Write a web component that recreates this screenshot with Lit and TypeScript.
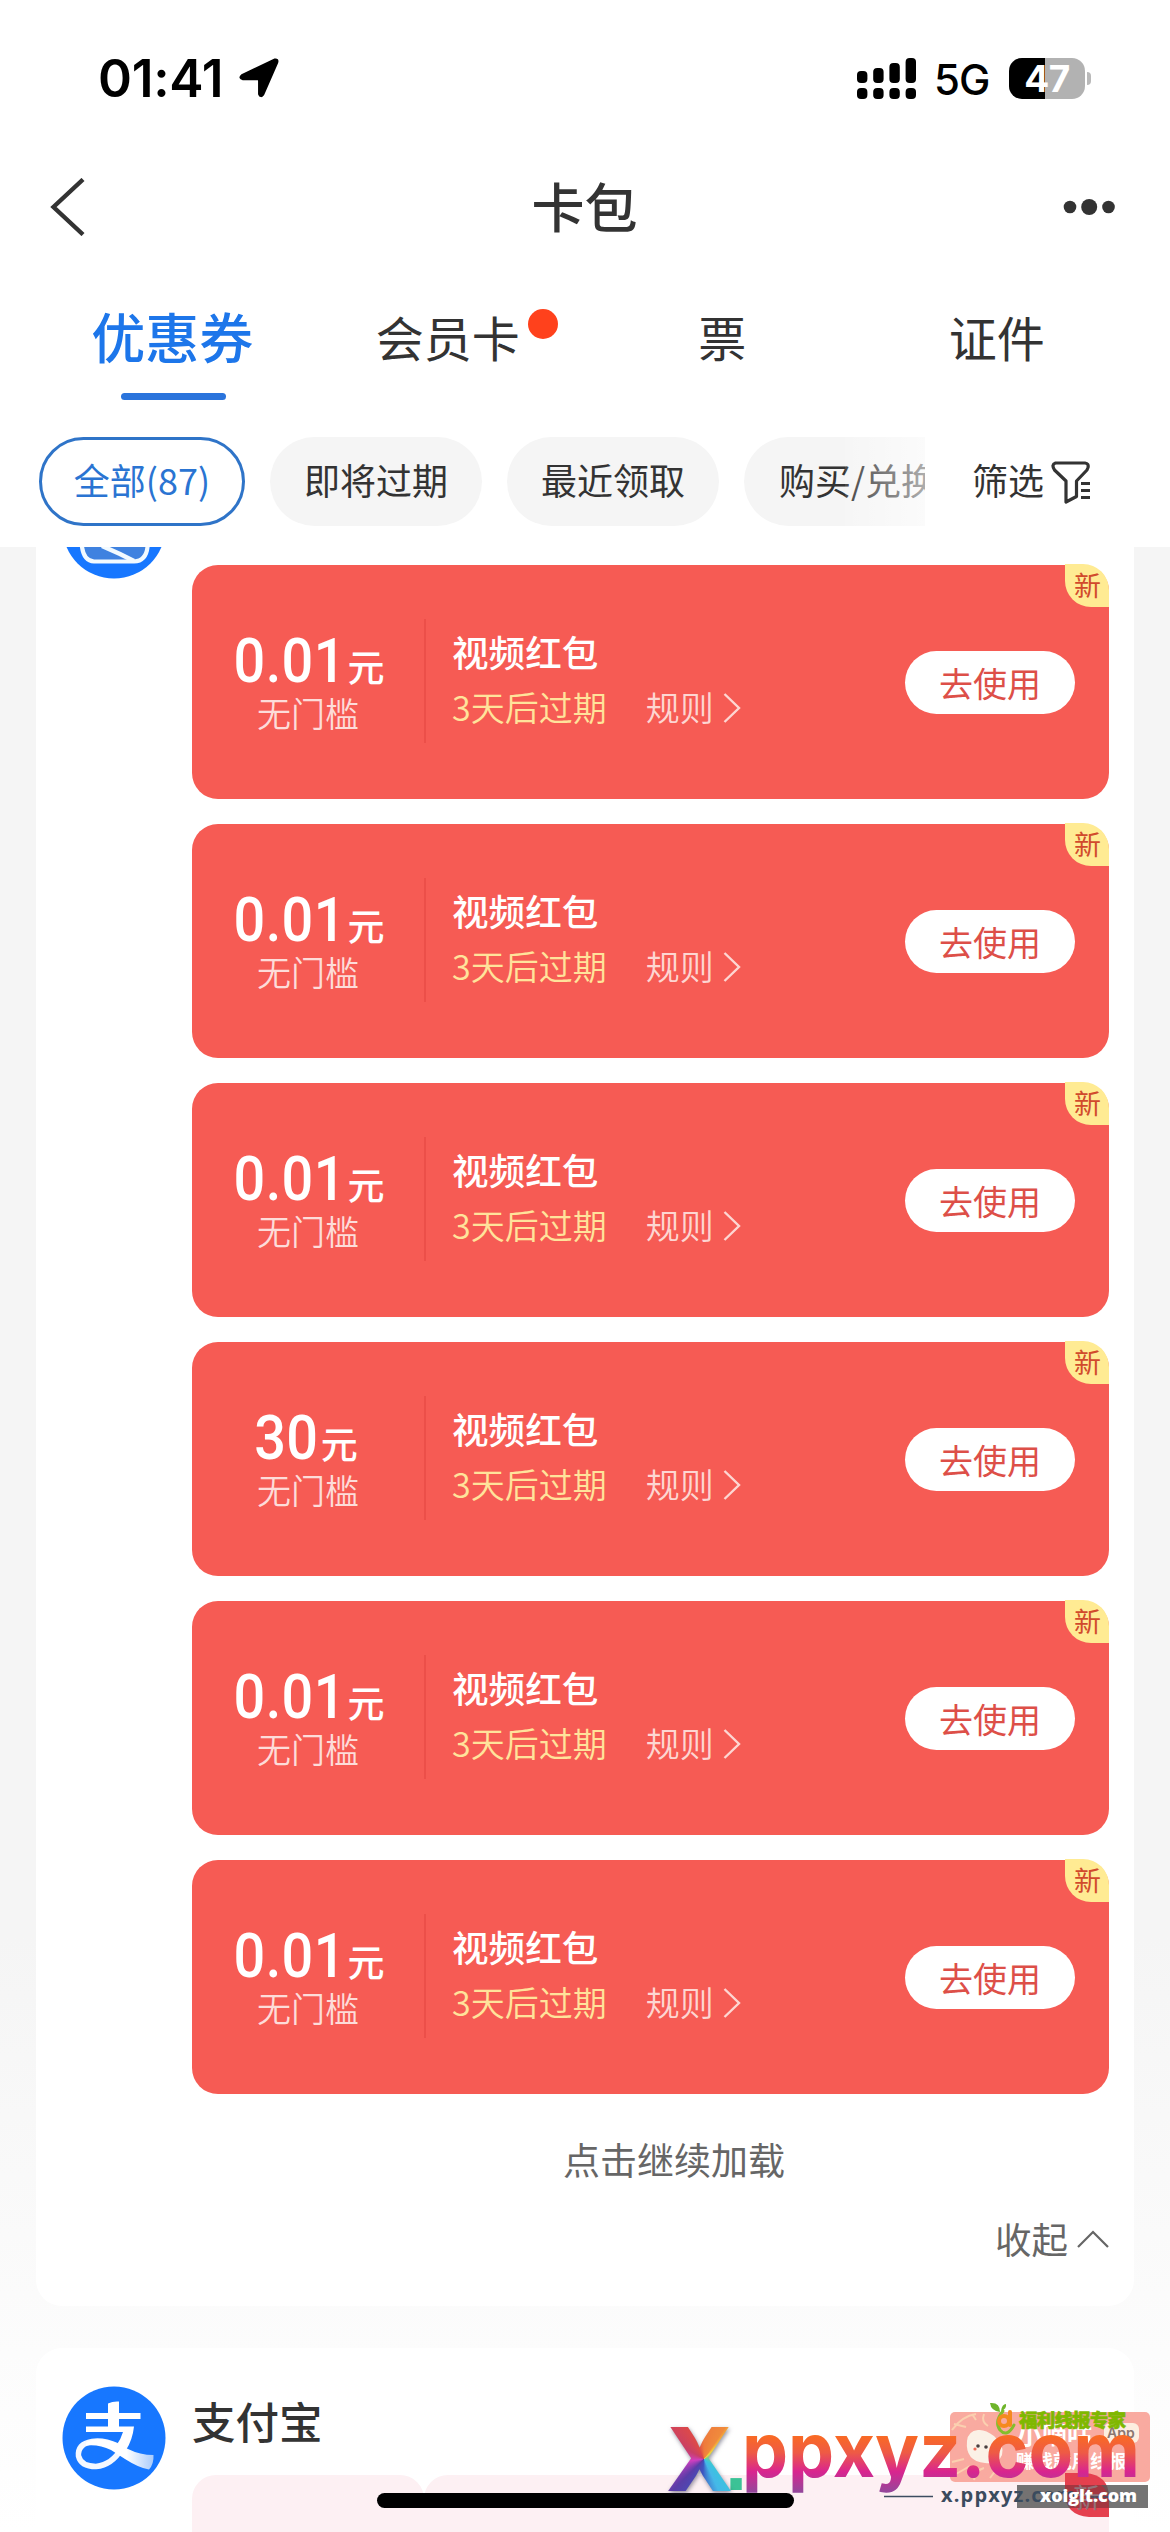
import { LitElement, html, css, svg } from "lit";
import { customElement, property } from "lit/decorators.js";

const sans = css`"Noto Sans CJK SC", "Noto Sans", sans-serif`;

@customElement("status-bar")
class StatusBar extends LitElement {
  static styles = css`
    :host {
      display: flex;
      align-items: center;
      height: 156px;
      padding: 0 79px 0 98px;
      box-sizing: border-box;
      font-family: Inter, sans-serif;
      color: #000;
    }
    .time {
      font-size: 51.5px;
      font-weight: 600;
      line-height: 60px;
      width: 129px;
      letter-spacing: -0.3px;
      white-space: nowrap;
    }
    .arrow { margin-left: 12px; }
    .signal { margin-left: auto; }
    .net {
      font-size: 42px;
      font-weight: 500;
      line-height: 60px;
      width: 55px;
      margin: 3px 0 0 18px;
      letter-spacing: -1px;
    }
    .battery {
      display: flex;
      align-items: center;
      margin-left: 20px;
    }
    .cell {
      width: 76px;
      height: 41px;
      border-radius: 13px;
      background: linear-gradient(90deg, #000 47%, #b2b2b2 47%);
      color: #fff;
      font-size: 37px;
      font-weight: 700;
      line-height: 41px;
      text-align: center;
      letter-spacing: -0.5px;
    }
    .nub {
      width: 4px;
      height: 13px;
      margin-left: 2px;
      border-radius: 0 4px 4px 0;
      background: #b9b9b9;
    }
  `;
  render() {
    const tops = [13, 10, 5, 0];
    return html`
      <span class="time">01:41</span>
      <svg class="arrow" width="40" height="40" viewBox="0 0 40 40">
        <path d="M3 17.500 35.500 1.800Q39 1 38 4.500L24 36.500Q21.600 39.500 20.300 36V22.500Q20.300 20.900 18.800 20.900L4 21Q0 20 3 17.500Z" stroke="#000" stroke-width="2.500" stroke-linejoin="round" />
      </svg>
      <svg class="signal" width="59" height="41" viewBox="0 0 59 41">
        ${tops.map(
          (t, i) => svg`
            <rect x=${i * 16.2} y=${t} width="10.4" height=${25 - t} rx="4" />
            <rect x=${i * 16.2} y="30" width="10.4" height="11" rx="4" />`
        )}
      </svg>
      <span class="net">5G</span>
      <div class="battery"><div class="cell">47</div><div class="nub"></div></div>
    `;
  }
}

@customElement("coupon-card")
class CouponCard extends LitElement {
  @property() amount = "0.01";
  static styles = css`
    :host {
      display: grid;
      grid-template-columns: 232px 1fr auto;
      position: relative;
      height: 234px;
      border-radius: 26px;
      background: #f65b54;
      color: #fff;
      font-family: ${sans};
    }
    .value {
      display: flex;
      flex-direction: column;
      align-items: center;
      padding-top: 65px;
    }
    .price {
      display: flex;
      align-items: baseline;
      height: 62px;
      line-height: 62px;
      white-space: nowrap;
    }
    .num {
      font-family: Roboto, sans-serif;
      font-size: 62px;
      font-weight: 500;
      letter-spacing: 0.5px;
      transform: scaleX(0.9);
      transform-origin: 100% 50%;
      margin-left: -11px;
    }
    .unit {
      font-size: 37px;
      font-weight: 500;
      margin-left: 2px;
    }
    .limit {
      font-size: 34px;
      font-weight: 350;
      line-height: 44px;
      color: #fddcd9;
      margin-top: -1px;
    }
    .info {
      margin: 54px 0 0;
      height: 124px;
      border-left: 2px solid #ec4f49;
      padding: 8px 0 0 26px;
      box-sizing: border-box;
    }
    .name {
      font-size: 36.6px;
      font-weight: 500;
      line-height: 50px;
    }
    .meta {
      display: flex;
      align-items: center;
      margin-top: 8px;
      font-size: 34px;
      line-height: 44px;
      color: #ffe39b;
      white-space: nowrap;
      font-weight: 350;
    }
    .rule {
      margin-left: 39px;
      color: #fdd6d2;
    }
    .chev { margin: 2px 0 0 9px; }
    .use {
      width: 170px;
      height: 63px;
      margin: 86px 34px 0 0;
      border: 0;
      padding: 0;
      border-radius: 32px;
      background: #fff;
      color: #dd4f48;
      font: 400 34px/61px ${sans};
      text-align: center;
    }
    .badge {
      position: absolute;
      top: -1px;
      right: 0;
      width: 44px;
      height: 43px;
      border-radius: 0 26px 0 26px;
      background: #ffeb93;
      color: #d14a2c;
      font-size: 27px;
      line-height: 41px;
      text-align: center;
      text-indent: 1px;
    }
  `;
  render() {
    return html`
      <div class="value">
        <div class="price"><span class="num">${this.amount}</span><span class="unit">元</span></div>
        <span class="limit">无门槛</span>
      </div>
      <div class="info">
        <div class="name">视频红包</div>
        <div class="meta">
          <span>3天后过期</span><span class="rule">规则</span>
          <svg class="chev" width="18" height="30" viewBox="0 0 18 30">
            <path d="M1.5 1 16 15 1.5 29" fill="none" stroke="#fdd6d2" stroke-width="2.4" />
          </svg>
        </div>
      </div>
      <button class="use">去使用</button>
      <span class="badge">新</span>
    `;
  }
}

@customElement("promo-marks")
class PromoMarks extends LitElement {
  static styles = css`
    :host { display: block; width: 510px; height: 132px; }
    .canvas { position: relative; width: 510px; height: 132px; }
    .art { position: absolute; inset: 0; }
    .x {
      position: absolute;
      left: 6px;
      top: -7px;
      font: 800 88px/132px Inter, sans-serif;
      color: transparent;
      background: conic-gradient(from 0deg at 38px 66px, #ee7a3c, #f08a3c 34deg, #f3d03a 44deg, #7ad08a 70deg, #39c5dd 130deg, #45b8e8 155deg, #3d55c0 185deg, #5a3da8 225deg, #d03fc0 262deg, #c93f66 300deg, #dd4a48 335deg, #ee7a3c);
      -webkit-background-clip: text;
      background-clip: text;
      filter: drop-shadow(1px 2px 2px rgba(40, 40, 70, 0.5));
    }
  `;
  render() {
    return html`
      <div class="canvas">
        <svg class="art" width="510" height="132" viewBox="660 2400 510 132">
          <defs>
            <linearGradient id="fire" gradientUnits="userSpaceOnUse" x1="0" y1="2435" x2="0" y2="2494">
              <stop offset="0" stop-color="#fa6b22" />
              <stop offset=".3" stop-color="#ee5a45" />
              <stop offset=".62" stop-color="#d9258f" />
              <stop offset="1" stop-color="#8e4a9c" />
            </linearGradient>
          </defs>
          <rect x="950" y="2412" width="200" height="70" rx="5" fill="#f9aaa0" />
          <g fill="none" stroke="#fbd0b0" stroke-width="2">
            <path d="M952 2430q10-14 24-16M954 2424l12 3M972 2414l4 6M984 2414q-3 8 4 12M952 2462l12-3M956 2474l14-8M974 2480q2-10 10-12M990 2478l6-8" />
          </g>
          <path d="M967 2441q1-10 11-11 7-1 16 6 11 10 8 19-4 10-17 8-20-2-18-22Z" fill="#fbf1e6" />
          <g fill="#4a4040"><circle cx="978" cy="2446" r="1.8" /><circle cx="986" cy="2447" r="1.8" /></g>
          <circle cx="975" cy="2449" r="1.6" fill="#f2705c" />
          <g fill="#fff" font-family="Noto Sans CJK SC, sans-serif" font-weight="700">
            <text x="1017" y="2444" font-size="25">小嘀咕</text>
            <text x="1016" y="2468" font-size="18.5">赚钱就用线报</text>
          </g>
          <rect x="1104" y="2423" width="35" height="20" rx="6" fill="#fdeee0" />
          <text x="1107" y="2438" font-family="Inter, sans-serif" font-size="14" font-weight="600" fill="#8b7770">App</text>
          <g fill="none" stroke-linecap="round">
            <path d="M1003 2411Q994 2422 1000 2430 1007 2438 1014 2425" stroke="#84be2c" stroke-width="3" />
            <circle cx="1004" cy="2421" r="5" stroke="#f58a1f" stroke-width="4" />
            <path d="M1010 2412v13" stroke="#f58a1f" stroke-width="4" />
          </g>
          <path d="M990 2403q10-1 10 9-9-1-10-9ZM1001 2411q1-7 5-7 1 5-5 7Z" fill="#6fb52b" />
          <text x="1019" y="2427" font-family="Noto Sans CJK SC, sans-serif" font-size="18.5" font-weight="900" fill="#7fb800" stroke="#7fb800" stroke-width=".6" textLength="107">福利线报专家</text>
          <path d="M1065 2473h20q24 2 24 24v20h-20q-24-2-24-24Z" fill="#e5404e" />
          <text x="742" y="2477" font-family="Inter, sans-serif" font-size="76" font-weight="700" fill="url(#fire)" textLength="398" lengthAdjust="spacingAndGlyphs">ppxyz.com</text>
          <rect x="1017" y="2485" width="131" height="23" fill="#555" fill-opacity=".82" />
          <path d="M1065 2485h36q8 6 8 18v5h-38q-6-8-6-18Z" fill="#b52d3a" fill-opacity=".75" />
          <text x="1073" y="2508" font-family="Noto Sans CJK SC, sans-serif" font-size="27" fill="#93737a">新</text>
          <path d="M884 2496.5h49M1086 2497h50" stroke="#3d4d60" stroke-width="1.6" />
          <text x="941" y="2502" font-family="Open Sans, sans-serif" font-size="20" font-weight="700" fill="#3a4b5e" textLength="135">x.ppxyz.com</text>
          <text x="1040" y="2502" font-family="Open Sans, sans-serif" font-size="18" font-weight="800" fill="#fff" textLength="97">xoiglt.com</text>
          <text x="725" y="2490" font-family="Liberation Sans, sans-serif" font-size="80" font-weight="700" fill="#3cc296">.</text>
        </svg>
        <span class="x">X</span>
      </div>
    `;
  }
}

@customElement("app-root")
class AppRoot extends LitElement {
  static styles = css`
    :host {
      display: flex;
      flex-direction: column;
      position: relative;
      width: 1170px;
      height: 2532px;
      overflow: hidden;
      background: #fff;
      color: #333;
      font-family: ${sans};
    }
    .nav {
      display: grid;
      grid-template-columns: 1fr auto 1fr;
      align-items: center;
      height: 102px;
      padding: 0 55px 0 50px;
    }
    .title {
      font-size: 53px;
      font-weight: 500;
      line-height: 60px;
      margin: -5px -4px 0 0;
    }
    .more { justify-self: end; }
    .tabs {
      display: grid;
      grid-template-columns: repeat(4, 1fr);
      height: 162px;
      padding: 0 36px;
      text-align: center;
      font-size: 48px;
      line-height: 156px;
    }
    .tab { position: relative; }
    .tab.on {
      color: #1d76ea;
      font-size: 54px;
      font-weight: 500;
      text-indent: -2px;
    }
    .tab.on::after {
      content: "";
      position: absolute;
      left: 85px;
      bottom: 20px;
      width: 105px;
      height: 7px;
      border-radius: 4px;
      background: #2a74dc;
    }
    .dot {
      position: absolute;
      left: 217px;
      top: 51px;
      width: 30px;
      height: 30px;
      border-radius: 50%;
      background: #ff411c;
    }
    .filters {
      display: flex;
      height: 127px;
      padding: 17px 0 0 39px;
      box-sizing: border-box;
      font-size: 36px;
      flex: none;
    }
    .scroller {
      display: flex;
      gap: 25px;
      position: relative;
      width: 886px;
      overflow: hidden;
      flex: none;
    }
    .chip {
      flex: none;
      width: 212px;
      height: 89px;
      border-radius: 45px;
      background: #f5f5f5;
      line-height: 84px;
      text-align: center;
      box-sizing: border-box;
      white-space: nowrap;
    }
    .chip.on {
      width: 206px;
      background: #fff;
      color: #2a74d2;
      border: 3px solid #2f74c8;
      line-height: 78px;
    }
    .chip.wide { width: 264px; }
    .fade {
      position: absolute;
      right: 0;
      top: 0;
      width: 80px;
      height: 89px;
      background: linear-gradient(90deg, rgba(255, 255, 255, 0.1), rgba(255, 255, 255, 0.6));
    }
    .sift {
      display: flex;
      margin-left: 47px;
      line-height: 84px;
    }
    .funnel { margin: 24px 0 0 7px; }
    .list {
      flex: 1;
      display: flex;
      flex-direction: column;
      gap: 42px;
      padding: 0 36px;
      min-height: 0;
      overflow: hidden;
      background: linear-gradient(#f5f5f5 70%, #fff);
    }
    .panel {
      display: grid;
      grid-template-columns: 156px 1fr;
      flex: none;
      background: #fff;
      border-radius: 26px;
      padding-right: 25px;
    }
    .panel.first {
      border-radius: 0 0 26px 26px;
      height: 1759px;
    }
    .brand { margin: 38px 0 0 26px; }
    .first .brand { margin-top: -72px; }
    .coupons {
      display: flex;
      flex-direction: column;
      gap: 25px;
      padding-top: 18px;
    }
    .load {
      margin-top: 15px;
      padding-left: 47px;
      text-align: center;
      font-size: 37px;
      line-height: 50px;
      color: #666;
    }
    .fold {
      display: flex;
      align-items: center;
      justify-content: flex-end;
      gap: 9px;
      margin-top: 30px;
      font-size: 36.5px;
      line-height: 50px;
      color: #666;
    }
    .shop {
      padding-top: 43px;
      font-size: 43.5px;
      font-weight: 500;
      line-height: 60px;
    }
    .peek {
      display: grid;
      grid-template-columns: 232px 1fr;
      height: 120px;
      margin-top: 24px;
    }
    .peek div {
      border-radius: 24px 24px 0 0;
      background: #fdf0f3;
    }
    .home {
      position: absolute;
      left: 377px;
      bottom: 24px;
      width: 417px;
      height: 15px;
      border-radius: 8px;
      background: #000;
    }
    .marks {
      position: absolute;
      left: 660px;
      bottom: 0;
    }
  `;

  private amounts = ["0.01", "0.01", "0.01", "30", "0.01", "0.01"];

  render() {
    return html`
      <status-bar></status-bar>
      <div class="nav">
        <svg width="36" height="58" viewBox="0 0 36 58">
          <path d="M33 1.5 3.5 29 33 56.5" fill="none" stroke="#333" stroke-width="4.4" />
        </svg>
        <span class="title">卡包</span>
        <svg class="more" width="52" height="18" viewBox="0 0 52 18" fill="#333">
          <circle cx="7" cy="9" r="6.3" /><circle cx="26.2" cy="9" r="8" /><circle cx="45.5" cy="9" r="6.3" />
        </svg>
      </div>
      <div class="tabs">
        <div class="tab on">优惠券</div>
        <div class="tab">会员卡<i class="dot"></i></div>
        <div class="tab">票</div>
        <div class="tab">证件</div>
      </div>
      <div class="filters">
        <div class="scroller">
          <div class="chip on">全部(87)</div>
          <div class="chip">即将过期</div>
          <div class="chip">最近领取</div>
          <div class="chip wide">购买/兑换券</div>
          <div class="fade"></div>
        </div>
        <div class="sift">
          筛选
          <svg class="funnel" width="40" height="43" viewBox="0 0 40 43" fill="none" stroke="#333" stroke-width="3.2" stroke-linejoin="round">
            <path d="M4.5 2H34Q38 2.500 37 6.500L36 9 25.500 20V35.500L15 41V20L3.500 9Q0 3.500 4.500 2Z" />
            <path d="M30 22.500h9M30 29.500h9M30 36.500h9" />
          </svg>
        </div>
      </div>
      <div class="list">
        <section class="panel first">
          <svg class="brand" width="104" height="104" viewBox="0 0 104 104">
            <circle cx="52" cy="52" r="51.500" fill="#1777ff" />
            <path d="M20 30V72Q22 86 32 86.500H72Q84 86 85.500 72V30Z" fill="#3f82e0" stroke="#f2faff" stroke-width="4.200" />
            <path d="M40 71 58 79 72 86" fill="none" stroke="#f2faff" stroke-width="4.500" />
          </svg>
          <div class="coupons">
            ${this.amounts.map((a) => html`<coupon-card amount=${a}></coupon-card>`)}
            <div>
              <div class="load">点击继续加载</div>
              <div class="fold">
                收起
                <svg width="32" height="18" viewBox="0 0 32 18">
                  <path d="M1 17 16 2 31 17" fill="none" stroke="#666" stroke-width="2.200" />
                </svg>
              </div>
            </div>
          </div>
        </section>
        <section class="panel">
          <svg class="brand" width="104" height="104" viewBox="0 0 104 104">
            <defs>
              <linearGradient id="tail" x1="0" x2="1">
                <stop offset=".6" stop-color="#fff" />
                <stop offset="1" stop-color="#a9cbfb" />
              </linearGradient>
            </defs>
            <circle cx="52" cy="52" r="51.500" fill="#1777ff" />
            <path d="M46 17.500Q51 15 57 15.500V27H78.500V33H57V40.500H72Q70.500 54 64 64L54 60Q59 53 61 46H24V40.500H46V33H24V27H46Z" fill="#fff" />
            <path d="M60 62Q50 79 34 80.500 19 80.500 16.500 70 15.500 58 30 55.500 41 53.500 56 60" fill="none" stroke="#f4f8ff" stroke-width="5.500" />
            <path d="M24 56.500Q35 50 53 56.500L66 63Q78 69 91.500 69Q92 78 87 83.500 77 82 63 73L49 64Q37 58 24 59.500Z" fill="url(#tail)" />
          </svg>
          <div>
            <div class="shop">支付宝</div>
            <div class="peek"><div></div><div></div></div>
          </div>
        </section>
      </div>
      <div class="home"></div>
      <promo-marks class="marks"></promo-marks>
    `;
  }
}
